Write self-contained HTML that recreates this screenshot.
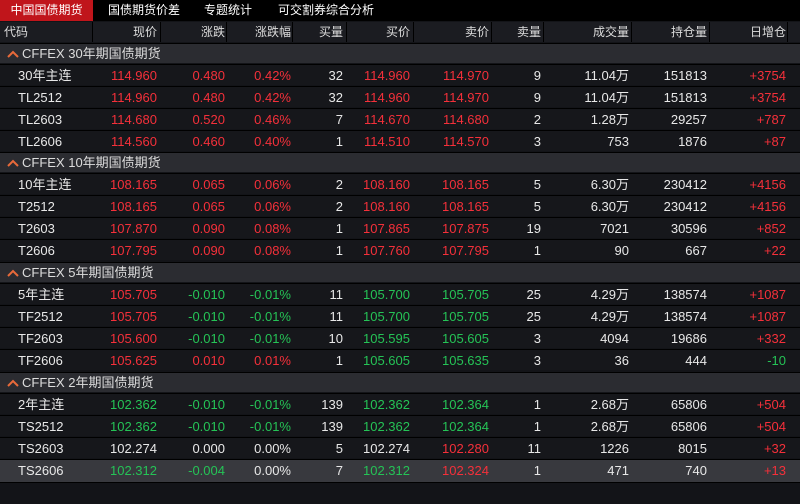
<!DOCTYPE html><html><head><meta charset="utf-8"><style>
*{margin:0;padding:0;box-sizing:border-box}
body{width:800px;height:504px;background:#131418;font-family:"Liberation Sans","Noto Sans CJK SC",sans-serif;font-size:13px;color:#e8e8e8;position:relative;overflow:hidden}
.tabs{position:absolute;top:0;left:0;width:800px;height:21px;background:#000;font-size:12px}
.tab{position:absolute;top:0;height:21px;line-height:21px;color:#fff}
.tab.a{background:#c0151b;left:0;width:93px;text-align:center}
.hd{position:absolute;top:22px;left:0;width:800px;height:20px;background:#1b1c21;font-size:12px;color:#ddd}
.hd span{position:absolute;top:0;line-height:20px;text-align:right}
.hd i{position:absolute;top:0;width:1px;height:20px;background:#000}
.row{position:absolute;left:0;width:800px;height:21px;background:#16171b;border-top:1px solid #000}
.row span{position:absolute;top:0;line-height:21px;text-align:right;white-space:nowrap}
.g{position:absolute;left:0;width:800px;height:20px;background:#2b2c31;line-height:20px;font-size:13px;color:#ddd;padding-left:22px;border-top:1px solid #000}
.g svg{position:absolute;left:7px;top:6px}
.r{color:#f5303a}.gr{color:#25c356}
.c0{left:18px;text-align:left!important}
.c1{right:643px}.c2{right:575px}.c3{right:509px}.c4{right:457px}.c5{right:390px}.c6{right:311px}.c7{right:259px}.c8{right:171px}.c9{right:93px}.c10{right:14px}
</style></head><body>
<div class="tabs"><div class="tab a">中国国债期货</div><div class="tab" style="left:108px">国债期货价差</div><div class="tab" style="left:204px">专题统计</div><div class="tab" style="left:278px">可交割券综合分析</div></div>
<div class="hd"><span style="left:4px;text-align:left">代码</span><i style="left:92px"></i><span class="c1">现价</span><i style="left:160px"></i><span class="c2">涨跌</span><i style="left:226px"></i><span class="c3">涨跌幅</span><i style="left:292px"></i><span class="c4">买量</span><i style="left:346px"></i><span class="c5">买价</span><i style="left:413px"></i><span class="c6">卖价</span><i style="left:491px"></i><span class="c7">卖量</span><i style="left:543px"></i><span class="c8">成交量</span><i style="left:631px"></i><span class="c9">持仓量</span><i style="left:709px"></i><span class="c10">日增仓</span><i style="left:787px"></i></div>

<div class="g" style="top:43px"><svg width="12" height="8"><path d="M1 7L6 2L11 7" stroke="#e86a3a" stroke-width="2" fill="none"/></svg>CFFEX 30年期国债期货</div>
<div class="row" style="top:64px"><span class="c0">30年主连</span><span class="c1 r">114.960</span><span class="c2 r">0.480</span><span class="c3 r">0.42%</span><span class="c4">32</span><span class="c5 r">114.960</span><span class="c6 r">114.970</span><span class="c7">9</span><span class="c8">11.04万</span><span class="c9">151813</span><span class="c10 r">+3754</span></div>
<div class="row" style="top:86px"><span class="c0">TL2512</span><span class="c1 r">114.960</span><span class="c2 r">0.480</span><span class="c3 r">0.42%</span><span class="c4">32</span><span class="c5 r">114.960</span><span class="c6 r">114.970</span><span class="c7">9</span><span class="c8">11.04万</span><span class="c9">151813</span><span class="c10 r">+3754</span></div>
<div class="row" style="top:108px"><span class="c0">TL2603</span><span class="c1 r">114.680</span><span class="c2 r">0.520</span><span class="c3 r">0.46%</span><span class="c4">7</span><span class="c5 r">114.670</span><span class="c6 r">114.680</span><span class="c7">2</span><span class="c8">1.28万</span><span class="c9">29257</span><span class="c10 r">+787</span></div>
<div class="row" style="top:130px"><span class="c0">TL2606</span><span class="c1 r">114.560</span><span class="c2 r">0.460</span><span class="c3 r">0.40%</span><span class="c4">1</span><span class="c5 r">114.510</span><span class="c6 r">114.570</span><span class="c7">3</span><span class="c8">753</span><span class="c9">1876</span><span class="c10 r">+87</span></div>

<div class="g" style="top:152px"><svg width="12" height="8"><path d="M1 7L6 2L11 7" stroke="#e86a3a" stroke-width="2" fill="none"/></svg>CFFEX 10年期国债期货</div>
<div class="row" style="top:173px"><span class="c0">10年主连</span><span class="c1 r">108.165</span><span class="c2 r">0.065</span><span class="c3 r">0.06%</span><span class="c4">2</span><span class="c5 r">108.160</span><span class="c6 r">108.165</span><span class="c7">5</span><span class="c8">6.30万</span><span class="c9">230412</span><span class="c10 r">+4156</span></div>
<div class="row" style="top:195px"><span class="c0">T2512</span><span class="c1 r">108.165</span><span class="c2 r">0.065</span><span class="c3 r">0.06%</span><span class="c4">2</span><span class="c5 r">108.160</span><span class="c6 r">108.165</span><span class="c7">5</span><span class="c8">6.30万</span><span class="c9">230412</span><span class="c10 r">+4156</span></div>
<div class="row" style="top:217px"><span class="c0">T2603</span><span class="c1 r">107.870</span><span class="c2 r">0.090</span><span class="c3 r">0.08%</span><span class="c4">1</span><span class="c5 r">107.865</span><span class="c6 r">107.875</span><span class="c7">19</span><span class="c8">7021</span><span class="c9">30596</span><span class="c10 r">+852</span></div>
<div class="row" style="top:239px"><span class="c0">T2606</span><span class="c1 r">107.795</span><span class="c2 r">0.090</span><span class="c3 r">0.08%</span><span class="c4">1</span><span class="c5 r">107.760</span><span class="c6 r">107.795</span><span class="c7">1</span><span class="c8">90</span><span class="c9">667</span><span class="c10 r">+22</span></div>

<div class="g" style="top:262px"><svg width="12" height="8"><path d="M1 7L6 2L11 7" stroke="#e86a3a" stroke-width="2" fill="none"/></svg>CFFEX 5年期国债期货</div>
<div class="row" style="top:283px"><span class="c0">5年主连</span><span class="c1 r">105.705</span><span class="c2 gr">-0.010</span><span class="c3 gr">-0.01%</span><span class="c4">11</span><span class="c5 gr">105.700</span><span class="c6 gr">105.705</span><span class="c7">25</span><span class="c8">4.29万</span><span class="c9">138574</span><span class="c10 r">+1087</span></div>
<div class="row" style="top:305px"><span class="c0">TF2512</span><span class="c1 r">105.705</span><span class="c2 gr">-0.010</span><span class="c3 gr">-0.01%</span><span class="c4">11</span><span class="c5 gr">105.700</span><span class="c6 gr">105.705</span><span class="c7">25</span><span class="c8">4.29万</span><span class="c9">138574</span><span class="c10 r">+1087</span></div>
<div class="row" style="top:327px"><span class="c0">TF2603</span><span class="c1 r">105.600</span><span class="c2 gr">-0.010</span><span class="c3 gr">-0.01%</span><span class="c4">10</span><span class="c5 gr">105.595</span><span class="c6 gr">105.605</span><span class="c7">3</span><span class="c8">4094</span><span class="c9">19686</span><span class="c10 r">+332</span></div>
<div class="row" style="top:349px"><span class="c0">TF2606</span><span class="c1 r">105.625</span><span class="c2 r">0.010</span><span class="c3 r">0.01%</span><span class="c4">1</span><span class="c5 gr">105.605</span><span class="c6 gr">105.635</span><span class="c7">3</span><span class="c8">36</span><span class="c9">444</span><span class="c10 gr">-10</span></div>

<div class="g" style="top:372px"><svg width="12" height="8"><path d="M1 7L6 2L11 7" stroke="#e86a3a" stroke-width="2" fill="none"/></svg>CFFEX 2年期国债期货</div>
<div class="row" style="top:393px"><span class="c0">2年主连</span><span class="c1 gr">102.362</span><span class="c2 gr">-0.010</span><span class="c3 gr">-0.01%</span><span class="c4">139</span><span class="c5 gr">102.362</span><span class="c6 gr">102.364</span><span class="c7">1</span><span class="c8">2.68万</span><span class="c9">65806</span><span class="c10 r">+504</span></div>
<div class="row" style="top:415px"><span class="c0">TS2512</span><span class="c1 gr">102.362</span><span class="c2 gr">-0.010</span><span class="c3 gr">-0.01%</span><span class="c4">139</span><span class="c5 gr">102.362</span><span class="c6 gr">102.364</span><span class="c7">1</span><span class="c8">2.68万</span><span class="c9">65806</span><span class="c10 r">+504</span></div>
<div class="row" style="top:437px"><span class="c0">TS2603</span><span class="c1">102.274</span><span class="c2">0.000</span><span class="c3">0.00%</span><span class="c4">5</span><span class="c5">102.274</span><span class="c6 r">102.280</span><span class="c7">11</span><span class="c8">1226</span><span class="c9">8015</span><span class="c10 r">+32</span></div>
<div class="row" style="top:459px;background:#38393e;height:23px"><span class="c0">TS2606</span><span class="c1 gr">102.312</span><span class="c2 gr">-0.004</span><span class="c3">0.00%</span><span class="c4">7</span><span class="c5 gr">102.312</span><span class="c6 r">102.324</span><span class="c7">1</span><span class="c8">471</span><span class="c9">740</span><span class="c10 r">+13</span></div>
<div style="position:absolute;top:482px;left:0;width:800px;height:1px;background:#000"></div>
</body></html>
